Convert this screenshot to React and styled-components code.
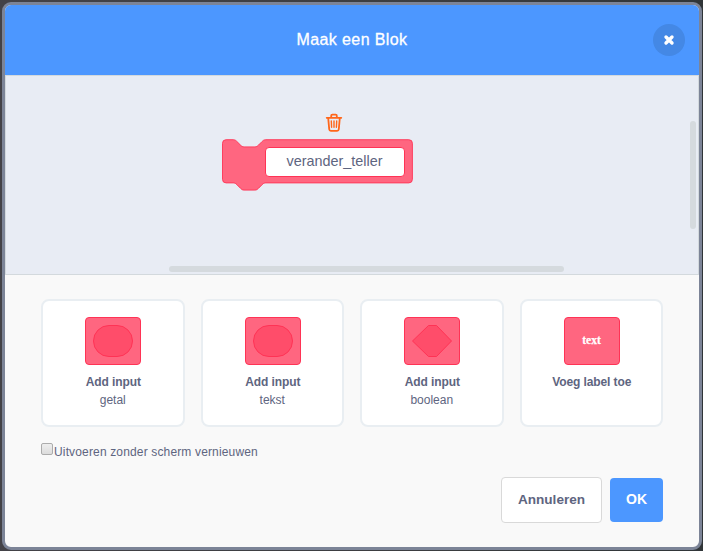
import React from 'react';
import styled, { createGlobalStyle } from 'styled-components';

const Global = createGlobalStyle`
  * { box-sizing: border-box; }
  body {
    margin: 0;
    background: #3d3d40;
    font-family: "Liberation Sans", Arial, Helvetica, sans-serif;
    color: #5e6580;
  }
  button { font-family: inherit; cursor: pointer; }
`;

const Overlay = styled.div`
  width: 703px;
  height: 551px;
  padding: 2px 1px 1px 2px;
  overflow: hidden;
  background: linear-gradient(90deg, #434247, #3b3d40 60%, #303538);
`;

const Modal = styled.div`
  height: 548px;
  display: flex;
  flex-direction: column;
  border: 3px solid #7c8497;
  border-radius: 9px;
  background: #f9f9f9;
  overflow: hidden;
`;

const Header = styled.header`
  height: 70px;
  flex: none;
  display: grid;
  grid-template-columns: 1fr auto 1fr;
  align-items: center;
  padding-right: 14px;
  background: #4c97ff;
`;

const Title = styled.h1`
  grid-column: 2;
  margin: 0 0 0 14px;
  font-size: 16px;
  line-height: 20px;
  font-weight: 400;
  letter-spacing: 0.38px;
  color: #fff;
  -webkit-text-stroke: 0.3px #fff;
`;

const CloseButton = styled.button`
  justify-self: end;
  display: grid;
  place-items: center;
  width: 32px;
  height: 32px;
  padding: 0;
  border: 0;
  border-radius: 50%;
  background: #4488e5;
`;

const Workspace = styled.section`
  position: relative;
  height: 200px;
  flex: none;
  border: 1px solid #d3d9dd;
  background: #e8ecf4;
`;

const BlockArea = styled.div`
  display: flex;
  flex-direction: column;
  width: 192px;
  margin: 37px 0 0 216px;
`;

const Trash = styled.svg`
  display: block;
  width: 18px;
  height: 20px;
  margin-left: 103px;
`;

const BlockBody = styled.div`
  display: grid;
  margin-top: 6px;
  > * { grid-area: 1 / 1; }
`;

const BlockShape = styled.svg`
  display: block;
  width: 192px;
  height: 53px;
`;

const BlockName = styled.div`
  width: 140px;
  height: 30px;
  margin: 8px 0 0 43px;
  padding-right: 1px;
  border: 1px solid #ff3355;
  border-radius: 4px;
  background: #fff;
  font-size: 14.4px;
  line-height: 27px;
  text-align: center;
`;

const ScrollThumb = styled.div`
  position: absolute;
  border-radius: 3px;
  background: #d5dade;
  ${({ $vertical }) => $vertical
    ? 'right: 2px; top: 45px; width: 6px; height: 108px;'
    : 'left: 163px; bottom: 2px; width: 395px; height: 6px;'}
`;

const Body = styled.section`
  padding: 24px 36px 0;
`;

const Options = styled.div`
  display: grid;
  grid-template-columns: repeat(4, 1fr);
  gap: 16px;
`;

const Option = styled.div`
  height: 128px;
  padding-top: 16px;
  display: flex;
  flex-direction: column;
  align-items: center;
  border: 2px solid #e9eef2;
  border-radius: 8px;
  background: #fff;
  font-size: 12px;
  line-height: 18px;
`;

const OptionIcon = styled.svg`
  display: block;
  width: 56px;
  height: 48px;
  margin: 0 0 8px 0.5px;
`;

const OptionTitle = styled.span`
  padding-left: 1px;
  font-weight: 700;
  letter-spacing: -0.1px;
`;

const CheckLabel = styled.label`
  display: flex;
  height: 20px;
  margin-top: 15px;
  font-size: 12px;
  line-height: 20px;
  letter-spacing: 0.15px;
`;

const Checkbox = styled.input`
  appearance: none;
  width: 12px;
  height: 12px;
  margin: 1px 1px 0 0;
  border: 1px solid #acacac;
  border-radius: 2px;
  background: linear-gradient(#eee, #dcdcdc);
`;

const Actions = styled.div`
  display: flex;
  justify-content: flex-end;
  align-items: center;
  gap: 8px;
  margin-top: 15px;
`;

const Button = styled.button`
  width: ${({ $primary }) => ($primary ? 53 : 101)}px;
  height: ${({ $primary }) => ($primary ? 44 : 46)}px;
  padding: 0 0 2px;
  border: ${({ $primary }) => ($primary ? '0' : '1px solid #d9d9d9')};
  border-radius: 4px;
  background: ${({ $primary }) => ($primary ? '#4c97ff' : '#fff')};
  color: ${({ $primary }) => ($primary ? '#fff' : '#5e6580')};
  font-size: ${({ $primary }) => ($primary ? 14 : 13.6)}px;
  font-weight: 700;
`;

const glyphs = {
  round: <rect x="8.5" y="8.5" width="39" height="31" rx="15.5" fill="#ff4d6a" stroke="#ff3355" />,
  boolean: <path d="M24.5 8.5h8L47.5 24l-15 15.5h-8L8.5 24z" fill="#ff4d6a" stroke="#ff3355" />,
  label: (
    <text x="27.5" y="27" textAnchor="middle" fill="#fff" stroke="#fff" strokeWidth=".25" fontFamily='"Liberation Serif", serif' fontSize="11.5" fontWeight="700">
      text
    </text>
  ),
};

const options = [
  { shape: 'round', title: 'Add input', kind: 'getal' },
  { shape: 'round', title: 'Add input', kind: 'tekst' },
  { shape: 'boolean', title: 'Add input', kind: 'boolean' },
  { shape: 'label', title: 'Voeg label toe' },
];

export default function App() {
  return (
    <>
      <Global />
      <Overlay>
        <Modal>
          <Header>
            <Title>Maak een Blok</Title>
            <CloseButton aria-label="Sluiten">
              <svg width="12" height="12" viewBox="0 0 12 12">
                <path d="M3 3l6 6M9 3l-6 6" stroke="#fff" strokeWidth="3.4" strokeLinecap="round" />
              </svg>
            </CloseButton>
          </Header>
          <Workspace>
            <BlockArea>
              <Trash viewBox="0 0 18 20" fill="none" stroke="#ff661a" strokeWidth="1.8" strokeLinecap="round" strokeLinejoin="round">
                <path d="M1.7 4.8h14.6M6.2 4.4V2.8q0-1.1 1.1-1.1h3.4q1.1 0 1.1 1.1v1.6M3.2 5l1 11.2q.1 1.6 1.7 1.6h6.2q1.6 0 1.7-1.6l1-11.2" />
                <path d="M6.3 8l.3 6.2M9 8v6.2M11.7 8l-.3 6.2" strokeWidth="1.4" />
              </Trash>
              <BlockBody>
                <BlockShape viewBox="0 0 192 53">
                  <path
                    transform="translate(.5 .7) scale(.9)"
                    d="M0 4A4 4 0 0 1 4 0H12c2 0 3 1 4 2l4 4c1 1 2 2 4 2h12c2 0 3-1 4-2l4-4c1-1 2-2 4-2H207a4 4 0 0 1 4 4V44a4 4 0 0 1-4 4H48c-2 0-3 1-4 2l-4 4c-1 1-2 2-4 2H24c-2 0-3-1-4-2l-4-4c-1-1-2-2-4-2H4a4 4 0 0 1-4-4z"
                    fill="#ff6680"
                    stroke="#ff3355"
                  />
                </BlockShape>
                <BlockName>verander_teller</BlockName>
              </BlockBody>
            </BlockArea>
            <ScrollThumb $vertical />
            <ScrollThumb />
          </Workspace>
          <Body>
            <Options>
              {options.map(({ shape, title, kind }) => (
                <Option key={title + kind}>
                  <OptionIcon viewBox="0 0 56 48">
                    <rect x=".5" y=".5" width="55" height="47" rx="3.5" fill="#ff6680" stroke="#ff3355" />
                    {glyphs[shape]}
                  </OptionIcon>
                  <OptionTitle>{title}</OptionTitle>
                  {kind && <span>{kind}</span>}
                </Option>
              ))}
            </Options>
            <CheckLabel>
              <Checkbox type="checkbox" />
              Uitvoeren zonder scherm vernieuwen
            </CheckLabel>
            <Actions>
              <Button>Annuleren</Button>
              <Button $primary>OK</Button>
            </Actions>
          </Body>
        </Modal>
      </Overlay>
    </>
  );
}
